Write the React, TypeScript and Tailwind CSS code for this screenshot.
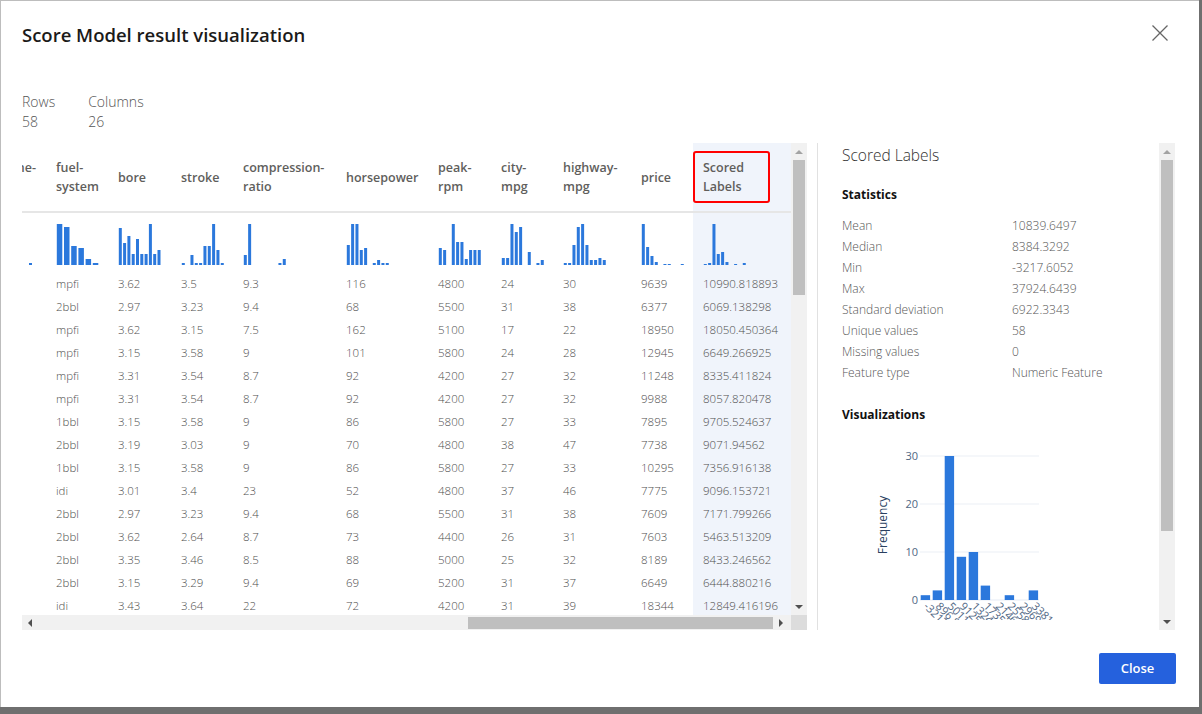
import React from "react";

type Col = { head: string[]; bars: number[]; pitch: number; w: number };

const cols: Col[] = [
  { head: ["fuel-", "system"], bars: [41, 38, 19, 17, 6, 2], pitch: 7.2, w: 5.5 },
  { head: ["bore"], bars: [37, 22, 29, 11, 26, 11, 11, 41, 11, 15], pitch: 4.3, w: 3 },
  { head: ["stroke"], bars: [2, 0, 10, 2, 2, 19, 19, 41, 15, 2], pitch: 4.33, w: 3 },
  { head: ["compression-", "ratio"], bars: [10, 41, 0, 0, 0, 0, 0, 0, 2, 6], pitch: 4.33, w: 3 },
  { head: ["horsepower"], bars: [20, 41, 41, 15, 17, 0, 2, 5, 2, 2], pitch: 4.33, w: 3 },
  { head: ["peak-", "rpm"], bars: [17, 15, 0, 41, 23, 23, 6, 15, 15, 15], pitch: 4.33, w: 3 },
  { head: ["city-", "mpg"], bars: [7, 7, 41, 33, 38, 0, 13, 0, 2, 5], pitch: 4.33, w: 3 },
  { head: ["highway-", "mpg"], bars: [2, 2, 20, 38, 41, 20, 5, 5, 7, 5], pitch: 4.33, w: 3 },
  { head: ["price"], bars: [41, 18, 9, 3, 0, 1, 1, 0, 0, 1], pitch: 4.33, w: 3 },
  { head: ["Scored", "Labels"], bars: [1, 2, 41, 11, 13, 3, 0, 1, 0, 2], pitch: 4.33, w: 3 },
];

const rows: string[][] = [
  ["mpfi", "3.62", "3.5", "9.3", "116", "4800", "24", "30", "9639", "10990.818893"],
  ["2bbl", "2.97", "3.23", "9.4", "68", "5500", "31", "38", "6377", "6069.138298"],
  ["mpfi", "3.62", "3.15", "7.5", "162", "5100", "17", "22", "18950", "18050.450364"],
  ["mpfi", "3.15", "3.58", "9", "101", "5800", "24", "28", "12945", "6649.266925"],
  ["mpfi", "3.31", "3.54", "8.7", "92", "4200", "27", "32", "11248", "8335.411824"],
  ["mpfi", "3.31", "3.54", "8.7", "92", "4200", "27", "32", "9988", "8057.820478"],
  ["1bbl", "3.15", "3.58", "9", "86", "5800", "27", "33", "7895", "9705.524637"],
  ["2bbl", "3.19", "3.03", "9", "70", "4800", "38", "47", "7738", "9071.94562"],
  ["1bbl", "3.15", "3.58", "9", "86", "5800", "27", "33", "10295", "7356.916138"],
  ["idi", "3.01", "3.4", "23", "52", "4800", "37", "46", "7775", "9096.153721"],
  ["2bbl", "2.97", "3.23", "9.4", "68", "5500", "31", "38", "7609", "7171.799266"],
  ["2bbl", "3.62", "2.64", "8.7", "73", "4400", "26", "31", "7603", "5463.513209"],
  ["2bbl", "3.35", "3.46", "8.5", "88", "5000", "25", "32", "8189", "8433.246562"],
  ["2bbl", "3.15", "3.29", "9.4", "69", "5200", "31", "37", "6649", "6444.880216"],
  ["idi", "3.43", "3.64", "22", "72", "4200", "31", "39", "18344", "12849.416196"],
];

const stats: [string, string][] = [
  ["Mean", "10839.6497"],
  ["Median", "8384.3292"],
  ["Min", "-3217.6052"],
  ["Max", "37924.6439"],
  ["Standard deviation", "6922.3343"],
  ["Unique values", "58"],
  ["Missing values", "0"],
  ["Feature type", "Numeric Feature"],
];

function Hist({ c }: { c: Col }) {
  return (
    <svg width="84" height="41" viewBox="0 0 84 41" className="block">
      {c.bars.map((h, i) =>
        h > 0 ? <rect key={i} x={0.8 + i * c.pitch} y={41 - h} width={c.w} height={h} fill="#2b78dc" /> : null
      )}
    </svg>
  );
}

function Arrow({ dir, color = "#505050" }: { dir: "up" | "down" | "left" | "right"; color?: string }) {
  const pts = {
    up: "0,4 4,0 8,4",
    down: "0,0 8,0 4,4",
    left: "4,0 4,8 0,4",
    right: "0,0 0,8 4,4",
  }[dir];
  const hor = dir === "up" || dir === "down";
  return (
    <svg width={hor ? 8 : 4} height={hor ? 4 : 8} className="block">
      <polygon points={pts} fill={color} />
    </svg>
  );
}

function VScroll({ thumbH }: { thumbH: string }) {
  return (
    <div className="w-[16px] shrink-0 bg-[#f1f1f1] flex flex-col items-center justify-between">
      <div className="w-full flex flex-col items-center">
        <div className="h-[17px] flex items-center justify-center">
          <Arrow dir="up" color="#a3a3a3" />
        </div>
        <div className={`w-[12px] bg-[#bfbfbf] ${thumbH}`} />
      </div>
      <div className="h-[17px] flex items-center justify-center">
        <Arrow dir="down" />
      </div>
    </div>
  );
}

function Chart() {
  const bars = [1, 2, 30, 9, 10, 3, 0, 1, 0, 2];
  const labels = ["-3217.6052", "896.8", "5011.2", "9125.6", "13240.1", "17354.5", "21468.9", "25583.4", "29697.8", "33812.3"];
  return (
    <svg width="240" height="190" viewBox="0 0 240 190" className="block" style={{ fontFamily: '"Open Sans", sans-serif' }}>
      {[0, 10, 20, 30].map((t) => {
        const y = 170 - t * 4.8;
        return (
          <g key={t}>
            <line x1="70" x2="189" y1={y} y2={y} stroke={t === 0 ? "#eef2f8" : "#f2f4f9"} strokeWidth="1.5" />
            <text x="68" y={y + 4} textAnchor="end" fontSize="11" fill="#506784">
              {t}
            </text>
          </g>
        );
      })}
      <text transform="translate(37 95) rotate(-90)" textAnchor="middle" fontSize="12" fill="#2a3f5f">
        Frequency
      </text>
      {bars.map((b, i) =>
        b > 0 ? <rect key={i} x={70.7 + i * 12} y={170 - b * 4.8} width="9.4" height={b * 4.8} fill="#2b78dc" /> : null
      )}
      {labels.map((l, i) => (
        <text key={l} transform={`translate(${73 + i * 12} 177) rotate(45)`} fontSize="11" fill="#506784">
          {l}
        </text>
      ))}
    </svg>
  );
}

export default function App() {
  return (
    <div
      className="w-[1202px] h-[714px] bg-[#6f6f6f] overflow-hidden"
      style={{ fontFamily: '"Open Sans", "Noto Sans", sans-serif' }}
    >
      <div className="w-[1199px] h-[707px] bg-white border-l border-t border-[#bdbdbd] flex flex-col">
        <h1 className="pl-[21px] pt-[20px] h-[91px] text-[18.5px] leading-[28px] font-semibold text-[#1b1a19] shrink-0">
          Score Model result visualization
        </h1>
        <div className="pl-[21px] flex gap-[33px] text-[14px] leading-[20px] font-light text-[#555] h-[51px] shrink-0">
          <div>
            <div>Rows</div>
            <div>58</div>
          </div>
          <div>
            <div>Columns</div>
            <div>26</div>
          </div>
        </div>

        <div className="pl-[21px] flex h-[487px] shrink-0">
          {/* table */}
          <div className="w-[785px] shrink-0 flex flex-col">
            <div className="flex h-[472px]">
              <div className="w-[769px] overflow-hidden">
                <div className="grid grid-cols-[24px_62px_63px_62px_103px_92px_63px_62px_78px_62px_98px] text-[#605e5c]">
                  <div className="h-[70px] border-b-2 border-[#e6e6e6] overflow-hidden flex justify-end items-center">
                    <div className="text-[12.5px] leading-[19px] font-semibold whitespace-nowrap pr-[10px]">
                      <div>engine-</div>
                      <div>&nbsp;</div>
                    </div>
                  </div>
                  {cols.map((c, i) => (
                    <div
                      key={i}
                      className={`h-[70px] border-b-2 border-[#e6e6e6] pl-[10px] flex flex-col justify-center text-[12.5px] leading-[19px] font-semibold whitespace-nowrap ${
                        i === 9 ? "bg-[#f0f4fb]" : ""
                      }`}
                    >
                      {c.head.map((t) => (
                        <div key={t}>{t}</div>
                      ))}
                    </div>
                  ))}
                  <div className="h-[59px] pt-[50px] pl-[7px]">
                    <div className="w-[3px] h-[2px] bg-[#2b78dc]" />
                  </div>
                  {cols.map((c, i) => (
                    <div key={i} className={`h-[59px] pt-[11px] pl-[10px] ${i === 9 ? "bg-[#f0f4fb]" : ""}`}>
                      <Hist c={c} />
                    </div>
                  ))}
                  {rows.map((r, ri) => (
                    <React.Fragment key={ri}>
                      <div className="h-[23px]" />
                      {r.map((v, i) => (
                        <div
                          key={i}
                          className={`h-[23px] pl-[10px] text-[11.5px] leading-[23px] font-light text-[#4f4f4f] whitespace-nowrap ${
                            i === 9 ? "bg-[#f0f4fb]" : ""
                          }`}
                        >
                          {v}
                        </div>
                      ))}
                    </React.Fragment>
                  ))}
                </div>
              </div>
              <VScroll thumbH="h-[135px]" />
            </div>
            {/* horizontal scrollbar */}
            <div className="h-[15px] flex">
              <div className="w-[769px] bg-[#f1f1f1] flex items-center pl-[6px] pr-[8px]">
                <Arrow dir="left" />
                <div className="ml-[436px] w-[305px] h-[12px] bg-[#bfbfbf]" />
                <div className="ml-auto">
                  <Arrow dir="right" />
                </div>
              </div>
              <div className="w-[16px] bg-[#dcdcdc]" />
            </div>
          </div>

          {/* side panel */}
          <div className="ml-[10px] w-[358px] shrink-0 border-l border-[#e1e1e1] flex">
            <div className="w-[341px] pl-[24px] overflow-hidden text-[#555]">
              <div className="text-[15.5px] leading-[24px] font-light text-[#323130] pt-[0px] mt-[0px]">Scored Labels</div>
              <div className="mt-[18px] text-[12px] leading-[20px] font-bold text-[#111]">Statistics</div>
              <div className="mt-[10px]">
                {stats.map(([k, v]) => (
                  <div key={k} className="flex h-[21px] text-[12px] leading-[21px] font-light">
                    <div className="w-[170px]">{k}</div>
                    <div>{v}</div>
                  </div>
                ))}
              </div>
              <div className="mt-[22px] text-[12px] leading-[20px] font-bold text-[#111]">Visualizations</div>
              <div className="ml-[8px] mt-[5px] overflow-hidden h-[198px]">
                <Chart />
              </div>
            </div>
            <VScroll thumbH="h-[371px]" />
          </div>
        </div>

        <div className="flex justify-end pr-[23px] pt-[23px]">
          <button className="w-[77px] h-[31px] rounded-[2px] bg-[#2561dd] text-white text-[13px] font-semibold">
            Close
          </button>
        </div>
      </div>

      {/* close icon, over the modal corner */}
      <svg width="16" height="16" viewBox="0 0 16 16" className="absolute left-[1152px] top-[25px]">
        <path d="M0.5 0.5 L15.5 15.5 M15.5 0.5 L0.5 15.5" stroke="#666" strokeWidth="1.3" fill="none" />
      </svg>
      {/* red annotation box */}
      <div className="absolute left-[693px] top-[151px] w-[77px] h-[52px] border-2 border-[#f00] rounded-[3px]" />
    </div>
  );
}
